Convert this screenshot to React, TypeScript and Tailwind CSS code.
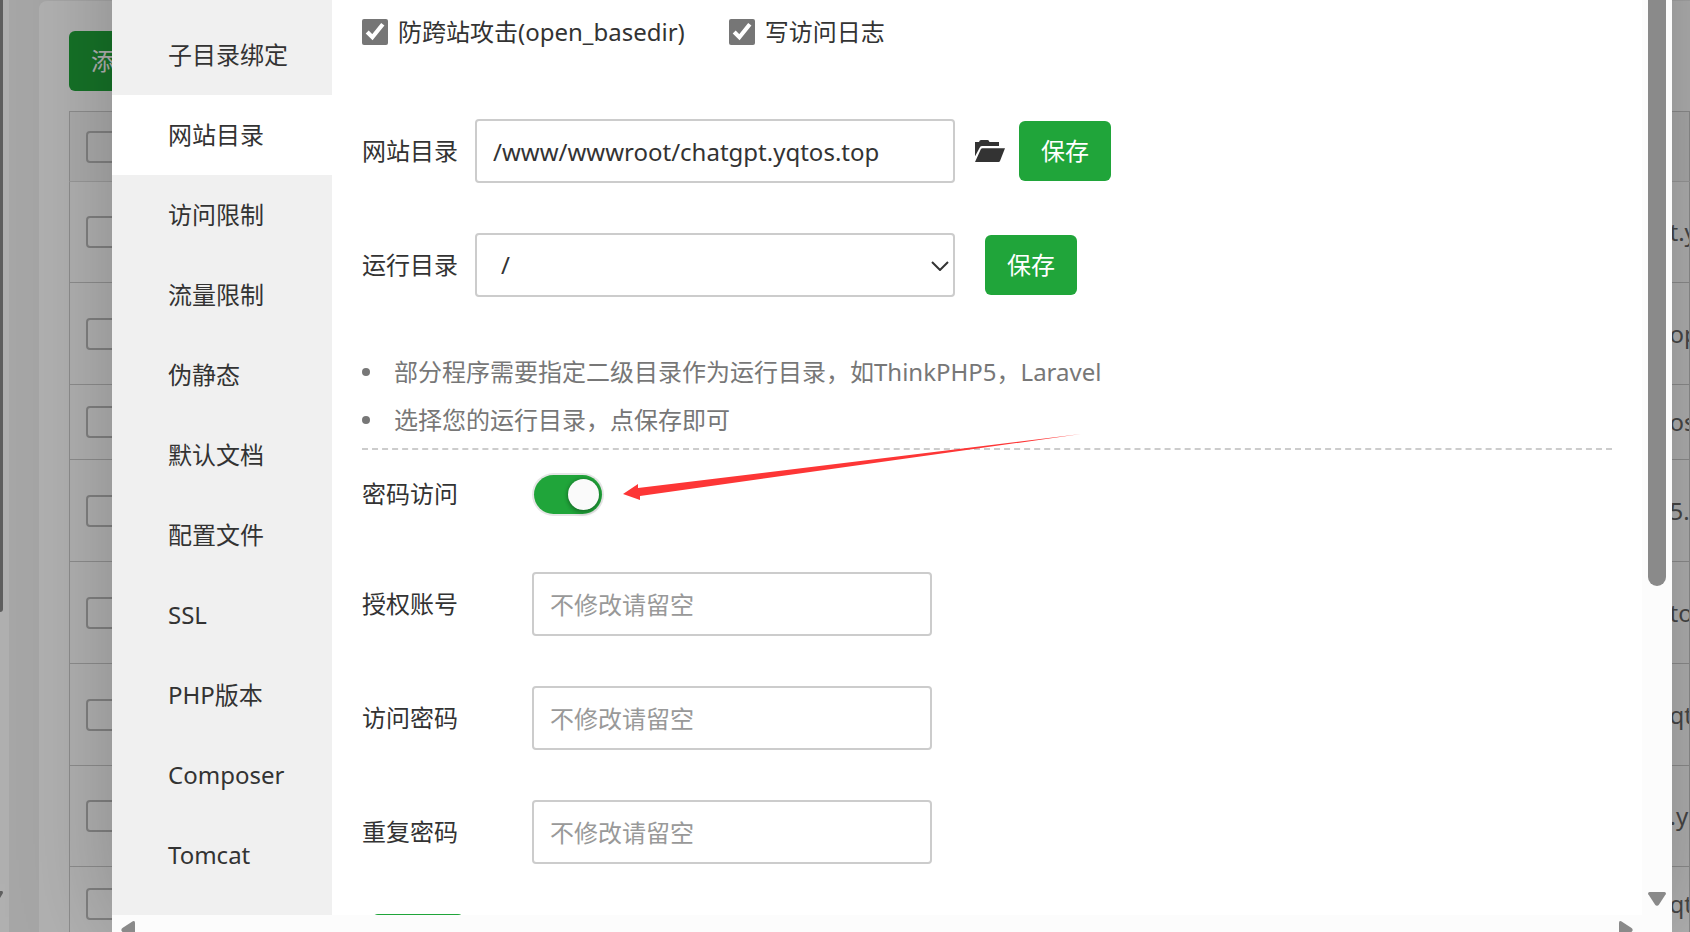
import React, { useState } from 'react';

const MENU_ITEMS = [
  '子目录绑定',
  '网站目录',
  '访问限制',
  '流量限制',
  '伪静态',
  '默认文档',
  '配置文件',
  'SSL',
  'PHP版本',
  'Composer',
  'Tomcat',
];

const SITE_ROWS = [
  { id: 1, text: 't.y', height: 'h-[101px]' },
  { id: 2, text: 'op', height: 'h-[102px]' },
  { id: 3, text: 'os', height: 'h-[75px]' },
  { id: 4, text: '5.y', height: 'h-[102px]' },
  { id: 5, text: 'to', height: 'h-[102px]' },
  { id: 6, text: 'qt', height: 'h-[102px]' },
  { id: 7, text: '.y', height: 'h-[101px]' },
  { id: 8, text: 'qt', height: 'h-[75px]' },
];

const AUTH_FIELDS = [
  { id: 'auth-user', label: '授权账号', type: 'text' },
  { id: 'auth-pass', label: '访问密码', type: 'password' },
  { id: 'auth-repeat', label: '重复密码', type: 'password' },
];

const inputClass =
  'h-16 rounded border-2 border-[#ccc] bg-white px-4 text-2xl text-[#333] outline-none placeholder:text-[#999]';

const SaveButton: React.FC = () => (
  <button type="button" className="h-[60px] shrink-0 rounded-md bg-[#20a53a] px-[22px] text-2xl text-white hover:bg-[#1b8f32]">
    保存
  </button>
);

const FolderIcon: React.FC = () => (
  <svg width="30" height="22" viewBox="0 0 30 22" fill="#333" aria-hidden="true">
    <path d="M0 2h4q.6-2 2-2h6.500q1.500 0 2 2H24v4H7.200Q5.500 6 4.800 7.400L.2 16H0z" />
    <path d="M7.600 8.200H30L25 21q-.4 1-1.400 1H0L5.800 9.300q.5-1.100 1.800-1.100z" />
  </svg>
);

const SitePage: React.FC = () => (
  <div className="flex h-full">
    <div className="flex w-[9px] shrink-0 flex-col justify-between bg-[#fcfcfc]">
      <div className="h-[612px] w-[3px] rounded-br-[3px] bg-[#888]" />
      <svg className="mb-[33px]" width="3" height="8" viewBox="0 0 3 8" fill="#888" aria-hidden="true">
        <path d="M0 0h2q1 0 1 2L0 7z" />
      </svg>
    </div>
    <div className="min-w-0 flex-1 bg-[#f0f0f0] pl-[30px] pt-px">
      <div className="h-full rounded-tl-lg bg-white pl-[30px] pt-[30px]">
        <button type="button" className="h-[60px] rounded-md bg-[#20a53a] px-[22px] text-2xl text-white">
          添加站点
        </button>
        <table className="mt-5 w-full table-fixed border-collapse border border-[#ccc] text-2xl text-[#666]">
          <thead>
            <tr className="h-[70px] border-b border-[#ddd] bg-[#f6f6f6]">
              <th className="pl-4 text-left">
                <input type="checkbox" aria-label="全选" className="block size-8 appearance-none rounded border-2 border-[#bbb]" />
              </th>
              <th className="w-5" />
            </tr>
          </thead>
          <tbody>
            {SITE_ROWS.map(row => (
              <tr key={row.id} className={`border-b border-[#ccc] ${row.height}`}>
                <td className="pl-4">
                  <input type="checkbox" aria-label={row.text} className="block size-8 appearance-none rounded border-2 border-[#bbb]" />
                </td>
                <td className="overflow-hidden whitespace-nowrap">{row.text}</td>
              </tr>
            ))}
          </tbody>
        </table>
      </div>
    </div>
  </div>
);

const Sidebar: React.FC<{ active: string; onSelect: (item: string) => void }> = ({ active, onSelect }) => (
  <nav className="w-[220px] shrink-0 bg-[#f0f0f0] pt-[15px]">
    {MENU_ITEMS.map(item => (
      <button
        key={item}
        type="button"
        onClick={() => onSelect(item)}
        className={`block h-20 w-full pl-14 text-left text-2xl ${item === active ? 'bg-white' : ''}`}
      >
        {item}
      </button>
    ))}
  </nav>
);

const DirectorySettings: React.FC = () => {
  const [basedir, setBasedir] = useState(true);
  const [accessLog, setAccessLog] = useState(true);
  const [path, setPath] = useState('/www/wwwroot/chatgpt.yqtos.top');
  const [passwordOn, setPasswordOn] = useState(true);

  return (
    <main className="min-w-0 flex-1 overflow-hidden px-[30px]">
      <div className="flex h-16 items-center gap-11">
        <label className="flex items-center gap-[10px]">
          <input type="checkbox" checked={basedir} onChange={e => setBasedir(e.target.checked)} className="size-[26px] accent-[#767676]" />
          防跨站攻击(open_basedir)
        </label>
        <label className="flex items-center gap-[10px]">
          <input type="checkbox" checked={accessLog} onChange={e => setAccessLog(e.target.checked)} className="size-[26px] accent-[#767676]" />
          写访问日志
        </label>
      </div>

      <div className="mt-[55px] flex items-center">
        <label htmlFor="site-path" className="w-[113px] shrink-0">网站目录</label>
        <input id="site-path" type="text" value={path} onChange={e => setPath(e.target.value)} className={`w-[480px] ${inputClass}`} />
        <button type="button" aria-label="选择目录" className="ml-5 mr-[14px]">
          <FolderIcon />
        </button>
        <SaveButton />
      </div>

      <div className="mt-[50px] flex items-center">
        <label htmlFor="run-path" className="w-[113px] shrink-0">运行目录</label>
        <div className="relative mr-[30px]">
          <select id="run-path" className="block h-16 w-[480px] appearance-none rounded border-2 border-[#ccc] bg-white px-6 text-2xl text-[#333] outline-none">
            <option>/</option>
          </select>
          <svg className="pointer-events-none absolute right-1.5 top-7" width="18" height="10" viewBox="0 0 18 10" fill="none" stroke="#333" strokeWidth="2" aria-hidden="true">
            <path d="M1 1l8 8 8-8" />
          </svg>
        </div>
        <SaveButton />
      </div>

      <ul className="mt-[51px] border-b-2 border-dashed border-[#ccc] pb-1 leading-[48px] text-[#777]">
        {['部分程序需要指定二级目录作为运行目录，如ThinkPHP5，Laravel', '选择您的运行目录，点保存即可'].map(tip => (
          <li key={tip} className="flex items-center gap-6">
            <span className="size-2 rounded-full bg-[#777]" />
            {tip}
          </li>
        ))}
      </ul>

      <div className="mt-3 flex h-16 items-center">
        <label htmlFor="password-access" className="w-[172px] shrink-0">密码访问</label>
        <div className="relative">
          <input
            id="password-access"
            type="checkbox"
            role="switch"
            checked={passwordOn}
            onChange={e => setPasswordOn(e.target.checked)}
            className="peer block h-[39px] w-[68px] cursor-pointer appearance-none rounded-full bg-[#ddd] ring-2 ring-[#e6e6e6] checked:bg-[#20a53a]"
          />
          <span className="pointer-events-none absolute left-1 top-1 size-[31px] rounded-full bg-[#fafafa] shadow-[0_4px_4px_rgba(0,0,0,0.15),0_0_4px_rgba(0,0,0,0.35)] peer-checked:left-[34px]" />
          {/* pointer to the switch */}
          <svg className="pointer-events-none absolute left-full top-[-42px] ml-5 max-w-none" width="460" height="68" viewBox="0 0 460 68" fill="#fd3636" aria-hidden="true">
            <path d="M1 61L16 51V55L459 1 18 63V67z" />
          </svg>
        </div>
      </div>

      <div className="mt-[46px] flex flex-col gap-[50px]">
        {AUTH_FIELDS.map(field => (
          <div key={field.id} className="flex items-center">
            <label htmlFor={field.id} className="w-[170px] shrink-0">{field.label}</label>
            <input id={field.id} type={field.type} placeholder="不修改请留空" className={`w-[400px] ${inputClass}`} />
          </div>
        ))}
        <div className="pl-[10px]">
          <SaveButton />
        </div>
      </div>
    </main>
  );
};

const App: React.FC = () => {
  const [active, setActive] = useState('网站目录');

  return (
    <div className="relative h-screen overflow-hidden bg-white font-['Noto_Sans','Noto_Sans_CJK_SC',sans-serif]">
      <SitePage />
      <div className="absolute inset-0 bg-black/30 pl-28 pr-[18px]">
        {/* the dialog runs past the top edge of the window */}
        <div className="-mt-28 flex h-[calc(100vh+112px)] flex-col bg-white pt-28 text-2xl text-[#333] shadow-[2px_2px_100px_rgba(0,0,0,0.25)]">
          <div className="flex min-h-0 flex-1">
            <Sidebar active={active} onSelect={setActive} />
            <DirectorySettings />
            <div className="flex w-[30px] shrink-0 flex-col items-center justify-between bg-[#fcfcfc]">
              <div className="h-[586px] w-[18px] rounded-b-full bg-[#8a8a8a]" />
              <svg className="mb-[9px]" width="18" height="14" viewBox="0 0 18 14" fill="#8a8a8a" aria-hidden="true">
                <path d="M1.500 0h15q2 .3 1.200 2.200l-6.500 10q-2.200 3-4.400 0l-6.500-10Q-.5.3 1.500 0z" />
              </svg>
            </div>
          </div>
          <div className="flex h-[17px] shrink-0 justify-between overflow-hidden bg-[#fcfcfc] pl-[9px] pr-[39px] pt-1.5">
            <svg width="14" height="18" viewBox="0 0 14 18" className="shrink-0" fill="#8a8a8a" aria-hidden="true">
              <path d="M14 1.500v15q-.3 2-2.200 1.200l-10-6.500q-3-2.200 0-4.400l10-6.500Q13.700-.5 14 1.500z" />
            </svg>
            <svg width="14" height="18" viewBox="0 0 14 18" className="shrink-0" fill="#8a8a8a" aria-hidden="true">
              <path d="M0 1.500v15q.3 2 2.200 1.200l10-6.500q3-2.200 0-4.400l-10-6.500Q.3-.5 0 1.500z" />
            </svg>
          </div>
        </div>
      </div>
    </div>
  );
};

export default App;
